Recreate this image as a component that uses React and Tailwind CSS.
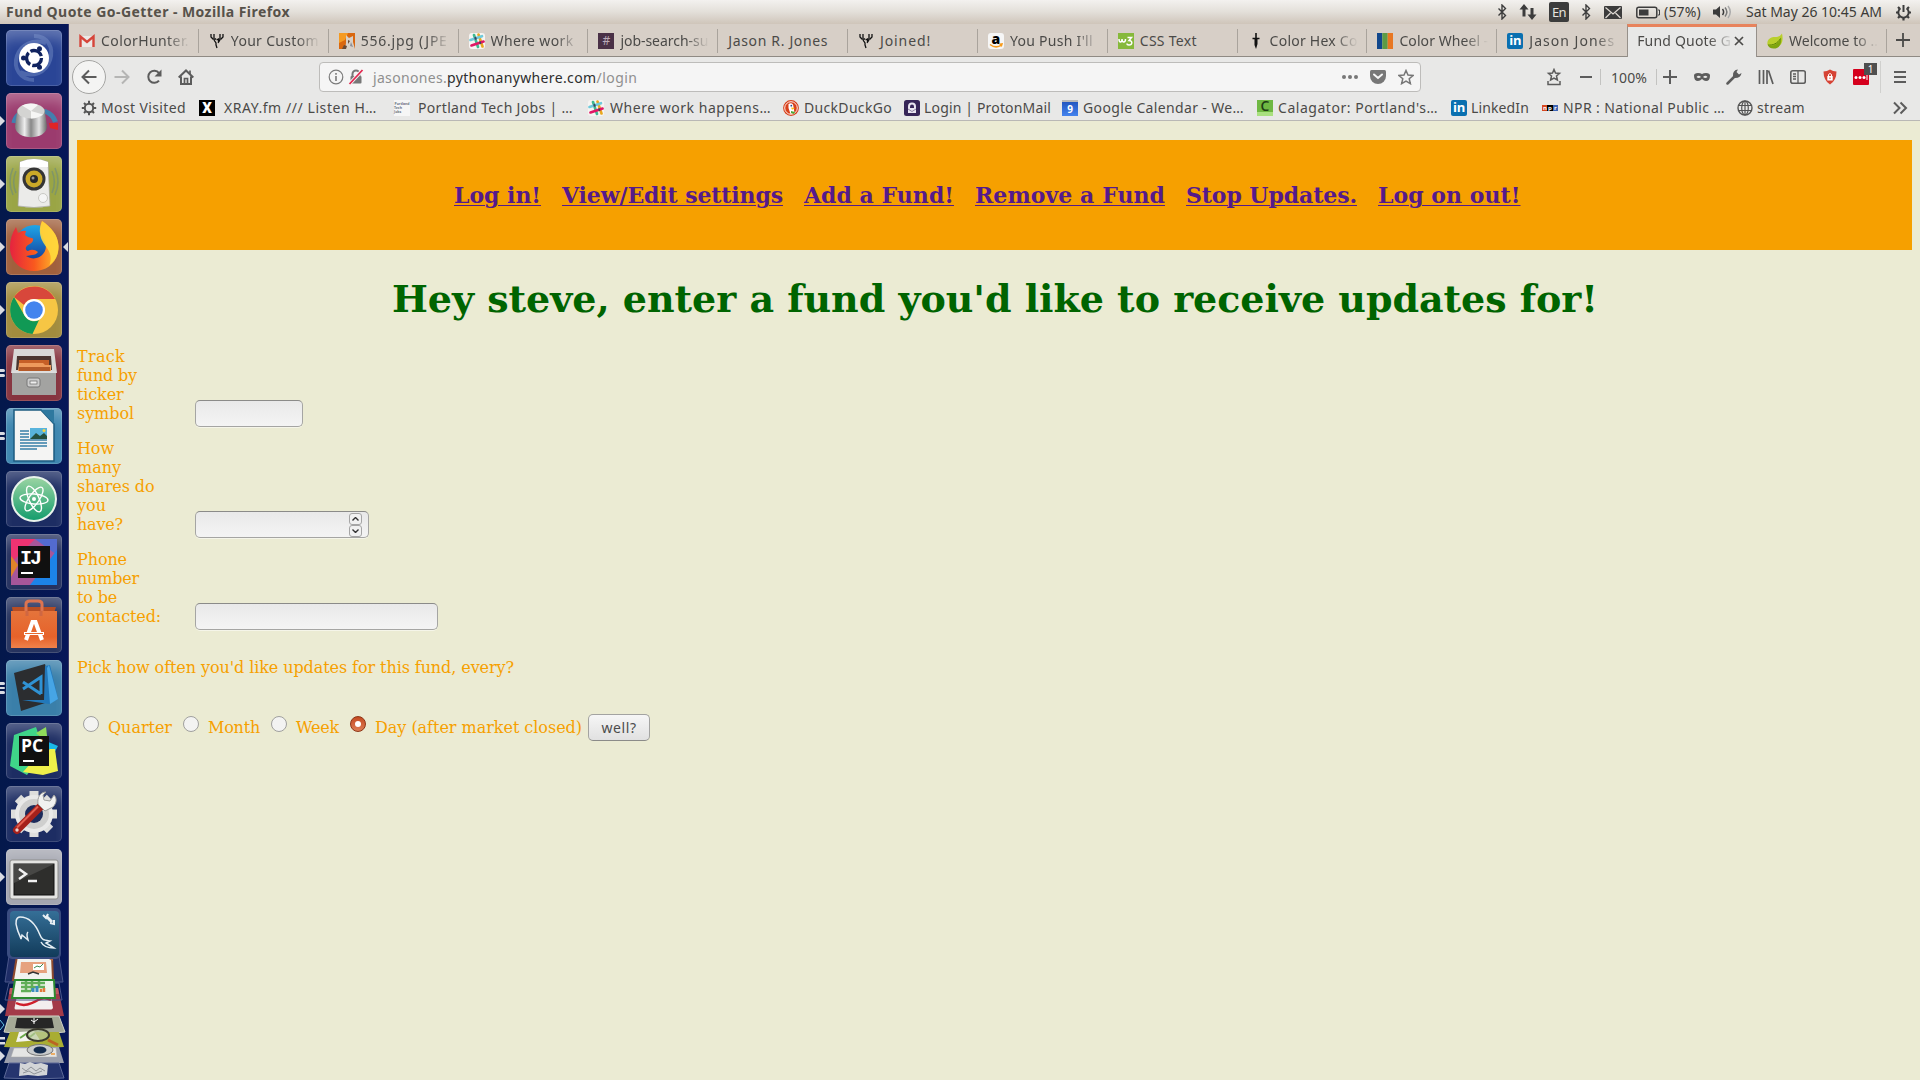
import React, { useLayoutEffect, useRef } from "react";

const UI = "font-['Noto_Sans','Open_Sans',sans-serif]";

/* Text run whose letter spacing is adjusted to fill a known width. */
function T({ w, className = "", children }) {
  const ref = useRef(null);
  useLayoutEffect(() => {
    const el = ref.current;
    el.style.letterSpacing = "0px";
    const natural = el.getBoundingClientRect().width;
    el.style.letterSpacing = `${(w - natural) / el.textContent.length}px`;
  }, [w]);
  return (
    <span ref={ref} className={`inline-block shrink-0 whitespace-pre ${className}`}>
      {children}
    </span>
  );
}

function Svg({ w = 16, h, vb, className = "", children }) {
  return (
    <svg width={w} height={h || w} viewBox={vb || `0 0 ${w} ${h || w}`} fill="none" className={`shrink-0 ${className}`}>
      {children}
    </svg>
  );
}

/* ---------- favicons ---------- */
const Gmail = () => (
  <Svg>
    <rect x="1" y="3" width="14" height="11" fill="#ece8e6" />
    <path d="M1.500 14V3.500L8 9l6.500-5.500V14" stroke="#d6453a" strokeWidth="2.400" />
  </Svg>
);
const Deer = () => (
  <Svg>
    <path d="M2 1v3l2 2h3M5 1v4M14 1v3l-2 2H9M11 1v4M5 7l2 3v2l1 3M11 7l-2 3M7.500 6.500h2v3" stroke="#111" strokeWidth="1.300" />
  </Svg>
);
const Photo = () => (
  <Svg>
    <rect width="16" height="16" fill="#d9670f" />
    <path d="M0 0h9L6 7 0 10z" fill="#f59a22" />
    <path d="M7 2l3 3 4-2v6l2 7H6l1-6z" fill="#d8cfc6" />
    <path d="M9 7l2 1-2 3zM5 12l3 1-1 3H3z" fill="#6b4a34" />
    <path d="M12 9l2 5-3-1z" fill="#8d8f97" />
  </Svg>
);
const Slack = () => (
  <Svg>
    <rect width="16" height="16" rx="3" fill="#f6f4f2" />
    <path d="M5 2l4 12" stroke="#3eb991" strokeWidth="2.600" strokeLinecap="round" />
    <path d="M9.500 1.500l4 12" stroke="#e9a820" strokeWidth="2.600" strokeLinecap="round" />
    <path d="M1.500 7L13 3.200" stroke="#6ecadc" strokeWidth="2.600" strokeLinecap="round" />
    <path d="M2.500 12.500L14.500 8.500" stroke="#e01765" strokeWidth="2.600" strokeLinecap="round" />
    <path d="M5.500 5.700l2-.7M10.500 10l1.500-.5" stroke="#36485e" strokeWidth="2.600" />
  </Svg>
);
const Hash = () => (
  <span className="flex size-4 shrink-0 items-center justify-center bg-[#4a3147] font-['Noto_Sans',sans-serif] text-[12px] leading-none text-[#b9a9b7]">#</span>
);
const Amazon = () => (
  <span className="relative flex size-4 shrink-0 justify-center rounded-[3px] bg-[#f6f6f6] font-['Open_Sans',sans-serif] text-[14px] leading-[11px] font-extrabold text-black">
    a
    <Svg className="absolute inset-0"><path d="M2 11.500c4 3 8 3 11.500.5M11.500 11.300l2.500-.3-.8 2.500" stroke="#f79b1c" strokeWidth="1.500" /></Svg>
  </span>
);
const W3 = () => (
  <Svg>
    <rect width="16" height="16" fill="#86b93b" />
    <path d="M1 6c0 4 3 4 3 0 0 4 3.500 4 3.500 0M9.500 4.500h4L11 7.500c4 0 3.500 4.500 0 4.500-1 0-2-.5-2-1.500" stroke="#fff" strokeWidth="1.500" />
  </Svg>
);
const Pen = () => (
  <Svg>
    <path d="M8 0v5M4.500 5.500h7" stroke="#111" strokeWidth="1.600" />
    <path d="M6.500 6h3v5L8 16l-1.500-4z" fill="#111" />
  </Svg>
);
const Bars = () => (
  <Svg>
    <path fill="#12488c" d="M0 0h5.300v16H0z" /><path fill="#5c9c45" d="M5.300 0h5.400v16H5.300z" /><path fill="#e87722" d="M10.700 0H16v16h-5.300z" />
  </Svg>
);
const LinkedIn = () => (
  <span className="flex size-4 shrink-0 items-center justify-center rounded-[2px] bg-[#0a70b0] pb-px font-['Open_Sans',sans-serif] text-[13px] leading-none font-bold tracking-tight text-white">in</span>
);
const Leaf = () => (
  <Svg>
    <path d="M15 0.500c2 9-1 13.500-8 13.500-3 0-5-.5-6.500-2C-.5 6 4 4 8 4c3 0 5.500-1 7-3.500z" fill="#b9cf2c" />
    <path d="M1 12.500c6 1 11-2 13-8 1 7-2 11-7.500 11-3 0-4.500-1.300-5.500-3z" fill="#7fa50e" />
    <path d="M1 12c5 .5 9.500-1.500 12.500-6.500" stroke="#5c8305" />
  </Svg>
);
const GearSmall = () => (
  <Svg>
    <circle cx="8" cy="8" r="4.200" stroke="#555" strokeWidth="2" />
    <path d="M8 .8v2.500M8 12.700v2.500M.8 8h2.500M12.700 8h2.500M3 3l1.700 1.700M11.300 11.300L13 13M3 13l1.700-1.700M11.300 4.700L13 3" stroke="#555" strokeWidth="2" />
  </Svg>
);
const XIcon = () => (
  <span className="flex size-4 shrink-0 items-center justify-center bg-black font-['Roboto',sans-serif] text-[15px] leading-none font-black text-white">X</span>
);
const Tiny = () => (
  <span className="flex size-4 shrink-0 flex-col items-center justify-center bg-[#f6f6f6] font-['Noto_Sans',sans-serif] text-[3.500px] leading-[4px] font-bold text-gray-500">
    <span>Portland</span><span>Tech Jobs</span>
  </span>
);
const Duck = () => (
  <Svg>
    <circle cx="8" cy="8" r="7.900" fill="#d8401b" /><circle cx="8" cy="8" r="6.300" stroke="#fff" strokeWidth=".9" />
    <path d="M5.500 4c3-2 5 0 5 3l1 6-4 1-2-6z" fill="#fff" />
    <path d="M8 7.500l4 .5-3 1.700z" fill="#fdbb12" /><path d="M8 11l4 1-1 2-3-1z" fill="#4caa35" /><circle cx="8.300" cy="5.700" r=".9" fill="#234a91" />
  </Svg>
);
const Proton = () => (
  <Svg>
    <rect width="16" height="16" rx="2.500" fill="#372658" />
    <path d="M4 13V6.500a4 4 0 018 0V13z" fill="#e9e5f0" />
    <path d="M6 8V6.500a2 2 0 014 0V8z" fill="#372658" /><path d="M4 9l4 2.500L12 9" stroke="#8d84a4" />
  </Svg>
);
const GCal = () => (
  <span className="flex size-4 shrink-0 items-center justify-center border-t-2 border-[#b9b9b9] bg-linear-to-b from-[#2457c0] to-[#4483ee] font-['Open_Sans',sans-serif] text-[10px] leading-none font-bold text-white">9</span>
);
const Cal = () => (
  <span className="flex size-4 shrink-0 items-center justify-center border-b-4 border-[#a9e07f] bg-[#6fb843] font-['Open_Sans',sans-serif] text-[14px] leading-none font-semibold text-[#1f3d14]">C</span>
);
const Npr = () => (
  <span className="flex size-4 shrink-0 items-center font-['Open_Sans',sans-serif] text-[6px] leading-[6px] font-bold text-white">
    <span className="w-[5px] bg-[#d7481f] pl-px">n</span><span className="w-[6px] bg-black pl-px">p</span><span className="w-[5px] bg-[#3f66b5] pl-px">r</span>
  </span>
);
const Globe = () => (
  <Svg>
    <circle cx="8" cy="8" r="7" stroke="#555" strokeWidth="1.400" /><ellipse cx="8" cy="8" rx="3.300" ry="7" stroke="#555" strokeWidth="1.200" />
    <path d="M1.500 5.500h13M1.500 10.500h13M8 1v14" stroke="#555" strokeWidth="1.200" />
  </Svg>
);

/* ---------- system panel ---------- */
const Bluetooth = ({ className }) => (
  <Svg w={10} h={16} className={className}><path d="M1.500 4.500l7 7L5 15V1l3.500 3.500-7 7" stroke="#3c3c3c" strokeWidth="1.400" /></Svg>
);

function Panel() {
  return (
    <header className={`flex h-6 items-center bg-linear-to-b from-[#f3f1ef] via-[#e3dfd9] to-[#cfc5ba] text-[#3c3b37] ${UI}`}>
      <T w={284} className="ml-1.5 text-[14px] leading-6 font-bold text-[#57524a]">Fund Quote Go-Getter - Mozilla Firefox</T>
      <div className="ml-auto flex h-6 items-center pr-2">
        <Bluetooth />
        <Svg w={18} h={16} className="ml-[12px]">
          <path d="M5 0L.500 5.500H3.500v7h3v-7h3zM13 16l-4.500-5.500h3V4h3v6.500h3z" fill="#3c3c3c" />
        </Svg>
        <span className="ml-[12px] flex h-5 w-5 items-center justify-center rounded-[2px] bg-[#3c3c3c] text-[13px] leading-5 text-[#e8e4df]"><T w={14}>En</T></span>
        <Bluetooth className="ml-[12px]" />
        <Svg w={18} h={13} className="ml-[13px]">
          <rect width="18" height="13" rx="1" fill="#3c3c3c" /><path d="M1.500 1.500L9 8l7.500-6.500M1.500 12L6.500 7M16.500 12l-5-5" stroke="#e0dbd5" strokeWidth="1.200" />
        </Svg>
        <Svg w={24} h={13} className="ml-[14px]">
          <rect x=".8" y="1.300" width="20" height="10.500" rx="2" stroke="#3c3c3c" strokeWidth="1.500" /><rect x="3" y="3.500" width="9.500" height="6" fill="#3c3c3c" /><path d="M22 4h1.500v5H22" stroke="#3c3c3c" />
        </Svg>
        <T w={37} className="ml-[4px] text-[14px] leading-6">(57%)</T>
        <Svg w={20} h={16} className="ml-[12px]">
          <path d="M0 5.500h3L7 2v12l-4-3.500H0z" fill="#3c3c3c" /><path d="M9.500 5c1.500 2 1.500 4 0 6" stroke="#3c3c3c" strokeWidth="1.500" /><path d="M12 3.500c2.500 3 2.500 6 0 9" stroke="#777" strokeWidth="1.500" /><path d="M15 2c3 4 3 8 0 12" stroke="#aaa" strokeWidth="1.500" />
        </Svg>
        <T w={136} className="ml-[13px] text-[14px] leading-6">Sat May 26 10:45 AM</T>
        <Svg w={17} className="ml-[13px]" vb="0 0 17 17">
          <path d="M5.500 4.200a5.200 5.200 0 106 0" stroke="#3c3c3c" strokeWidth="2" /><path d="M8.500 1v7" stroke="#3c3c3c" strokeWidth="2" />
          <path d="M1 8.500h2M14 8.500h2M3 14l1.500-1.500M14 14l-1.500-1.500M8.500 14v2.500M3 3l1.500 1.500M14 3l-1.500 1.500" stroke="#3c3c3c" strokeWidth="2.200" />
        </Svg>
      </div>
    </header>
  );
}

/* ---------- launcher ---------- */
const Dash = () => (
  <>
    <path d="M28 6c14 0 20 12 16 24-4 13-17 18-30 12M28 50C14 50 7 38 11 26 15 14 27 9 40 13" stroke="#8ea5d8" strokeWidth="4" opacity=".35" />
    <circle cx="28" cy="28" r="15" fill="#fff" /><circle cx="28" cy="28" r="7.500" stroke="#10235f" strokeWidth="3.300" strokeDasharray="13.500 2.200" />
    <circle cx="17.500" cy="28" r="2.500" fill="#10235f" /><circle cx="33.500" cy="18.700" r="2.500" fill="#10235f" /><circle cx="33.500" cy="37.300" r="2.500" fill="#10235f" />
  </>
);
const Knob = () => (
  <>
    <path d="M8 30c1-7 8-12 14-13M38 18c6 2 10 6 11.500 11" stroke="#437fae" strokeWidth="5" /><path d="M43 30l9 0v7l-8-2z" fill="#e02426" />
    <path d="M9 33l2.500-17h27L41 33c0 15-32 15-32 0z" fill="url(#metal)" /><ellipse cx="25" cy="18" rx="13.500" ry="7.500" fill="#d4d4d2" /><path d="M25 18l-9-5.500q8-3.500 16-.5zM25 18l12 3.500q-5 4-12 4z" fill="#f6f6f5" />
  </>
);
const Speaker = () => (
  <>
    <path d="M7 12c-4 9-4 18 0 27M49 12c4 9 4 18 0 27M10 15c-3 7-3 15 0 22M46 15c3 7 3 15 0 22" stroke="#6d8b7d" strokeWidth="1.500" opacity=".6" />
    <path d="M14 6q14-6 28 0l2 44q-16 3-32 0z" fill="#ebebe9" stroke="#a5a5a0" strokeWidth=".7" /><path d="M14 6q14-6 28 0v5H14z" fill="#fff" />
    <circle cx="28" cy="23" r="11.500" fill="#353535" /><circle cx="28" cy="23" r="8.500" fill="#cba928" /><circle cx="28" cy="23" r="4" fill="#292929" /><circle cx="27" cy="22" r="1.500" fill="#999" /><circle cx="37" cy="42" r="4.500" fill="#f5f5f5" stroke="#c9c9c5" />
  </>
);
const Firefox = () => (
  <>
    <circle cx="29" cy="27" r="21" fill="url(#ffblue)" />
    <path d="M36 2c9 6 16 14 16.500 25C53 42 42 52 28 52 14 52 4 42 4 28c0-7 2-14 6-20l2 6q4-3 8-2l-1 4q3 3 8 3.500 1 4-5 6.500c-3 2-3 5 0 6q5-3 10 1-2 3-6 3c-3 0-3 1-6 1 9 6 20 0 20-10 0-7-9-12-4-25z" fill="url(#ff)" />
    <path d="M36 2c9 6 16 14 16.500 25 0 8-3 15-9 19 3-8 0-14-4-19-5-7-8-14-3.500-25z" fill="#ffd83c" opacity=".9" />
  </>
);
const Chrome = () => (
  <>
    <circle cx="28" cy="28" r="24" fill="#f6c644" /><path d="M8 15A24 24 0 0149 17H28a11 11 0 00-10 6z" fill="#d8473b" />
    <path d="M8 15l10.500 18.500A11 11 0 0033 38L26.500 52A24 24 0 018 15z" fill="#119955" /><circle cx="28" cy="28" r="11" fill="#fff" /><circle cx="28" cy="28" r="8.800" fill="#4384ee" />
  </>
);
const Files = () => (
  <>
    <path d="M8 4h40l3 24H5z" fill="#d9d9d7" /><path d="M11 11h34l1 14H10z" fill="#4b3630" /><path d="M13 15h30v10H13z" fill="#c65f27" /><path d="M13 18h24l2 2h6v6H12z" fill="#ee9a5c" /><path d="M13 22h31v4H13z" fill="#b55a28" />
    <path d="M6 26h44v24H6z" fill="#a3a3a1" /><path d="M6 26h44v2H6z" fill="#ddd" /><rect x="21" y="33" width="13" height="9" rx="2" fill="#ccc" stroke="#777" /><rect x="24" y="36" width="7" height="3" fill="#eee" stroke="#666" strokeWidth=".7" />
  </>
);
const Writer = () => (
  <>
    <path d="M8 2h27l13 14v37H8z" fill="#f4f4f3" stroke="#1d5b80" strokeWidth="1.500" /><path d="M35 2h13v14z" fill="#2e789f" />
    <path d="M14 23h9M14 26h9M14 29h9M14 32h27M14 35h27M14 38h27M14 41h17" stroke="#347da8" strokeWidth="1.500" />
    <rect x="24" y="20" width="17" height="11" fill="#58b3dc" /><path d="M24 31l6-6 4 3 4-3 3 3v3z" fill="#244f40" /><circle cx="38" cy="22.500" r="1.500" fill="#f5d33f" />
  </>
);
const Atom = () => (
  <>
    <circle cx="28" cy="28" r="22" fill="url(#atom)" stroke="#e9f3ec" strokeWidth="2" /><circle cx="28" cy="28" r="2" fill="#fff" />
    <g stroke="#fff" strokeWidth="1.400"><ellipse cx="28" cy="28" rx="14" ry="5" transform="rotate(5 28 28)" /><ellipse cx="28" cy="28" rx="14" ry="5" transform="rotate(65 28 28)" /><ellipse cx="28" cy="28" rx="14" ry="5" transform="rotate(125 28 28)" /></g>
  </>
);
const IJ = () => (
  <>
    <path d="M5 5h46v46H5z" fill="#a75699" /><path d="M5 5h24L5 29z" fill="#ee3372" /><path d="M5 22l7 9-7 12z" fill="#e08329" /><path d="M29 5h22v16z" fill="#536bd0" /><path d="M24 51l27-35v35z" fill="#1c83e8" />
    <path d="M12 12h32v32H12z" fill="#101010" /><path d="M15 38h12v2H15z" fill="#fff" />
    <text x="14" y="30" fill="#fff" fontFamily="Liberation Mono" fontWeight="700" fontSize="20" letterSpacing="-2">IJ</text>
  </>
);
const Bag = () => (
  <>
    <path d="M6 10h44l-2 6H7z" fill="#b84e23" /><path d="M20 18V7q0-3 4-3h8q4 0 4 3v11" stroke="#dc7450" strokeWidth="3" /><path d="M5 14h46v37H5z" fill="url(#bag)" /><path d="M21 19v-5M35 19v-5" stroke="#cf6742" strokeWidth="3" />
    <path d="M20 43l6.500-18h3L36 43" stroke="#fff" strokeWidth="4" /><path d="M18 36.500h20" stroke="#fff" strokeWidth="3" /><path d="M19 36.500h18" stroke="#e8672c" strokeWidth="1" />
  </>
);
const Code = () => (
  <>
    <path d="M8 13l31-9 9 36-33 11z" fill="#2b2d30" /><path d="M39 6l5-1 8 34-9 5-27-4h22z" fill="#2278ba" /><path d="M43 5l9 34-8 5-3-36z" fill="#46a5e5" />
    <path d="M17 22l18 12M17 29l18-12v17" stroke="#2f92d4" strokeWidth="3" />
  </>
);
const PyCharm = () => (
  <>
    <path d="M8 12l22-8 8 24-17 24L4 43z" fill="#3fd589" /><path d="M30 10l10-6 2 17z" fill="#8fdc5b" /><path d="M40 18l12 5-6 11z" fill="#19b8e8" /><path d="M44 26h5l3 22-15 4-20-3 8-9z" fill="#eff04a" />
    <path d="M13 13h30v30H13z" fill="#101010" /><path d="M17 37h11v2H17z" fill="#fff" /><text x="15" y="29" fill="#fff" fontFamily="Open Sans" fontWeight="700" fontSize="17.500">PC</text>
  </>
);
const Settings = () => (
  <>
    <path d="M28 5v46M5 28h46M12 12l32 32M44 12L12 44" stroke="#dededc" strokeWidth="9" /><circle cx="28" cy="28" r="19" fill="#e9e9e8" /><circle cx="28" cy="28" r="15" fill="#cfcfce" /><circle cx="28" cy="28" r="9" fill="#1c2b5b" />
    <path d="M11 44l23-23" stroke="#a5211b" strokeWidth="8" strokeLinecap="round" /><path d="M11 41.500l21-21" stroke="#e56050" strokeWidth="2" />
    <path d="M32 18l7 7 8-4c4-4 4-9 1-12l-4 6-6-1-1-5 3-3c-6 0-9 6-8 12z" fill="#f1f1f0" stroke="#9e9e9c" /><circle cx="11" cy="44" r="1.700" fill="#e9d0cd" />
  </>
);
const Terminal = () => (
  <>
    <rect x="4" y="11" width="48" height="39" rx="2" fill="#e4e4e2" stroke="#8e8e8c" /><rect x="8" y="15" width="40" height="31" fill="#2e2e2c" stroke="#111" /><path d="M8 15h40L8 34z" fill="#474745" />
    <path d="M13 20l7 5-7 5" stroke="#f1f1f1" strokeWidth="2.500" /><path d="M22 32h9" stroke="#f1f1f1" strokeWidth="2.500" />
  </>
);

const TILES = [
  [Dash, "bg-[#2a4596]", 0],
  [Knob, "bg-[#9b3b6e]", 1],
  [Speaker, "bg-[#9aa545]", 1],
  [Firefox, "bg-[#a0603d]", 1],
  [Chrome, "bg-[#a28c3e]", 1],
  [Files, "bg-[#86343f]", 2],
  [Writer, "bg-[#3d86b0]", 2],
  [Atom, "bg-[#1d2d63]", 0],
  [IJ, "bg-[#25315f]", 0],
  [Bag, "bg-[#26335f]", 0],
  [Code, "bg-[#3a7fa9]", 3],
  [PyCharm, "bg-[#1d2d63]", 0],
  [Settings, "bg-[#1d2d63]", 0],
  [Terminal, "bg-[#a4a6b0]", 1],
];

function Pips({ n }) {
  if (n === 1) return <Svg w={5} h={10} className="absolute top-[23px] -left-1.5"><path d="M0 0l5 5-5 5z" fill="#d9dbe2" /></Svg>;
  return (
    <span className="absolute top-[22px] -left-1.5 flex h-3 flex-col justify-center gap-[2px]">
      {Array.from({ length: n }, (_, i) => <i key={i} className="h-[3px] w-[5px] rounded-r-sm bg-[#d9dbe2]" />)}
    </span>
  );
}

/* Folded launcher items at the bottom edge. */
const Folded = () => (
  <Svg w={68} h={172} className="-mt-[4px] -ml-1.5">
    <path d="M9 48h50l4 26H5z" fill="#1f2d67" stroke="#4a568a" />
    <path d="M17 48h35l1 24H13z" fill="#f2f2ef" stroke="#8d4a2e" strokeWidth="2" />
    <path d="M45 49h8v4z" fill="#b0673f" />
    <path d="M21 54h25l1 11H20z" fill="#e6a17e" /><path d="M33 56h11v6H33z" fill="#fff" /><path d="M34 60l3-2 3 1 3-3" stroke="#3b8950" /><path d="M28 66l5-2 6 2" stroke="#333" strokeWidth="1.500" />
    <rect x="7" y="0" width="54" height="51" rx="5" fill="#3a4c80" /><rect x="10" y="3" width="49" height="46" rx="4" fill="url(#sql)" />
    <path d="M17 20c-2-6-1-11 3-11 10 0 16 8 20 18 2 5 3 5 10 6l-4 2 8 5c-7 0-11-2-13-6M17 20c1 5 3 7 4 11l1-4 6 5c-1-4-2-6 0-8" stroke="#e5eef4" strokeWidth="1.500" />
    <path d="M46 8l6 6" stroke="#e8eff4" strokeWidth="3" /><path d="M43 7l3 3 2-4M50 15l4 1v-4" stroke="#e8eff4" strokeWidth="2" />
    <path d="M10 80h48l6 28q-30 2-59 0z" fill="#a33a49" /><path d="M10 80h48l1 6H9z" fill="#c05762" />
    <path d="M17 88h34l2 12q-1 1.500-2 1.500H16q-1.500 0-1.500-1.500z" fill="#f3eeee" /><path d="M16 95c8 4 15 1 22-3 5-3 9-2 13 0" stroke="#d01f2a" strokeWidth="2.500" />
    <path d="M9 75h50l3 17H5z" fill="none" stroke="#4a568a" />
    <path d="M15 72h39l1 18H12z" fill="#eef3ea" stroke="#2c8a30" strokeWidth="2" /><path d="M21 75h24M21 79h24M21 83h10M26 73v11M32 73v10M39 73v6" stroke="#61ae58" strokeWidth="2.500" /><path d="M33 84v-4M37 84v-6" stroke="#3b8dc0" strokeWidth="3" /><path d="M41 84v-3M44 84v-4" stroke="#e3793b" strokeWidth="2.500" />
    <path d="M9 108h50l6 16q-31 4-61 0z" fill="#a5a996" stroke="#d0d2c6" /><path d="M17 110h35l2 10q-19 1-39 0z" fill="#262626" /><path d="M34 110v6M31 112l3 2 4-3" stroke="#fff" />
    <path d="M10 124h49l5 15q-30 2-60 0z" fill="#a9ad33" /><path d="M19 124l15-1 6 9-24 2z" fill="#f4f4ee" /><path d="M20 130l6-4 4 3 5-4" stroke="#6aa84a" strokeWidth="2" /><ellipse cx="38" cy="127" rx="11" ry="6" fill="#b9ca9b" fillOpacity=".7" stroke="#3a3a2d" strokeWidth="2" /><path d="M48 132l10 5" stroke="#ba6522" strokeWidth="3" />
    <path d="M10 139h49l5 16H4z" fill="#9b9fac" /><path d="M14 140h42l1 9H11z" fill="#e5e5e4" stroke="#aaa" strokeWidth=".5" /><ellipse cx="40" cy="142" rx="13" ry="5.500" fill="#c9cbcc" stroke="#777" /><ellipse cx="40" cy="142" rx="6.500" ry="3.500" fill="#142b4d" /><path d="M51 146h4" stroke="#ee9a3d" strokeWidth="1.500" />
    <path d="M9 155h50l5 15q-30 2-60 0z" fill="#26356f" stroke="#5a6796" /><path d="M20 155l5 1 5-2 5 2 6-1 7 2-1 10-9 1-10-1-9 1z" fill="#d3d5d7" /><path d="M22 160l4 3 5-4 5 4 4-3 5 3M23 165l6-2 5 3 8-3" stroke="#909499" />
    <path d="M0 96l5 5-5 5z" fill="#d9dbe2" /><path d="M0 112l4 5-4 5" stroke="#66c5e8" /><path d="M0 129h5v2.500H0zM0 134h5v2.500H0z" fill="#d9dbe2" /><path d="M0 143l5 5-5 5z" fill="#d9dbe2" />
  </Svg>
);

function Launcher() {
  return (
    <aside className="flex w-[69px] shrink-0 flex-col items-start gap-[7px] border-r border-[#3b3a66] bg-linear-to-r from-[#04184b] to-[#071758] pt-1.5 pl-1.5">
      {TILES.map(([Icon, bg, n], i) => (
        <div key={i} className={`relative size-14 shrink-0 rounded-[5px] shadow-[inset_0_0_0_1px_rgba(255,255,255,0.15),inset_0_14px_14px_-6px_rgba(255,255,255,0.28)] ${bg}`}>
          <Svg w={56}><Icon /></Svg>
          {n > 0 && <Pips n={n} />}
          {Icon === Firefox && <Svg w={5} h={10} className="absolute top-[23px] left-[57px]"><path d="M5 0v10L0 5z" fill="#d9dbe2" /></Svg>}
        </div>
      ))}
      <Folded />
      <svg width="0" height="0" className="absolute">
        <defs>
          <linearGradient id="metal"><stop stopColor="#777" /><stop offset=".3" stopColor="#eee" /><stop offset=".5" stopColor="#888" /><stop offset=".75" stopColor="#e4e4e4" /><stop offset="1" stopColor="#666" /></linearGradient>
          <linearGradient id="ff" x1="0" x2="1"><stop stopColor="#e5233f" /><stop offset=".5" stopColor="#f9591e" /><stop offset="1" stopColor="#ffc32b" /></linearGradient>
          <linearGradient id="ffblue" x1="0" y1="0" x2="0" y2="1"><stop stopColor="#1fa6e8" /><stop offset="1" stopColor="#112b8c" /></linearGradient>
          <linearGradient id="atom" x1="0" y1="0" x2="0" y2="1"><stop stopColor="#9cd5a3" /><stop offset="1" stopColor="#139c6c" /></linearGradient>
          <linearGradient id="bag" x1="0" y1="0" x2="0" y2="1"><stop stopColor="#e5743b" /><stop offset=".7" stopColor="#e6622a" /><stop offset="1" stopColor="#f0824b" /></linearGradient>
          <linearGradient id="sql" x1="0" y1="0" x2="0" y2="1"><stop stopColor="#356f97" /><stop offset="1" stopColor="#123b5a" /></linearGradient>
        </defs>
      </svg>
    </aside>
  );
}

/* ---------- browser chrome ---------- */
const TABS = [
  [Gmail, "ColorHunter.", 88, 1],
  [Deer, "Your Custom", 88, 1],
  [Photo, "556.jpg (JPE", 87, 1],
  [Slack, "Where work", 83, 1],
  [Hash, "job-search-su", 88, 1],
  [null, "Jason R. Jones", 100, 0],
  [Deer, "Joined!", 51, 0],
  [Amazon, "You Push I'll", 83, 1],
  [W3, "CSS Text", 57, 0],
  [Pen, "Color Hex Co", 88, 1],
  [Bars, "Color Wheel -", 89, 1],
  [LinkedIn, "Jason Jones", 86, 1],
  [null, "Fund Quote G", 94, 1],
  [Leaf, "Welcome to ..", 89, 1],
];

function Tabs() {
  return (
    <div className="flex h-[33px] shrink-0 bg-[#d7cfc7]">
      {TABS.map(([Icon, label, w, fade], i) => {
        const active = i === 12;
        return (
          <div
            key={label}
            className={`flex w-[129.850px] shrink-0 items-center pl-2.5 ${active ? "border-x border-t-[3px] border-x-[#96908a] border-t-[#e8835c] bg-[#e8e8e7] pb-[2px] pl-[9px]" : "border-b border-[#8f8a84] pt-px"}`}
          >
            {Icon && <span className="mr-1.5 flex"><Icon /></span>}
            <div className={`min-w-0 flex-1 ${fade ? "mask-r-from-74%" : ""} ${active ? "mr-0" : "mr-2"}`}>
              <T w={w} className="align-top text-[14px] leading-6 text-[#4b4a48]">{label}</T>
            </div>
            {active ? (
              <Svg w={10} className="mr-3"><path d="M1 1l8 8M9 1L1 9" stroke="#4b4a48" strokeWidth="1.700" /></Svg>
            ) : (
              i !== 11 && <i className="h-6 w-px shrink-0 bg-[#a9a39c]" />
            )}
          </div>
        );
      })}
      <div className="flex flex-1 items-center justify-center border-b border-[#8f8a84]">
        <Svg w={14}><path d="M7 0v14M0 7h14" stroke="#4b4a48" strokeWidth="1.800" /></Svg>
      </div>
    </div>
  );
}

const G = "#5c5c5c";

function NavBar() {
  return (
    <div className="flex h-[40px] shrink-0 items-center pl-[3px]">
      <span className="flex size-[34px] shrink-0 items-center justify-center rounded-full border border-[#a5a5a3] bg-[#f4f4f3]">
        <Svg><path d="M15.500 8H1.500M8 1.500L1.500 8 8 14.500" stroke={G} strokeWidth="2" /></Svg>
      </span>
      <Svg className="ml-[8px]"><path d="M.5 8h14M8 1.500L14.500 8 8 14.500" stroke="#b5b5b4" strokeWidth="2" /></Svg>
      <Svg className="ml-[16px]"><path d="M13 11.500A6 6 0 1113 4" stroke={G} strokeWidth="2" /><path d="M15.500 .5v7h-7z" fill={G} /></Svg>
      <Svg className="ml-[16px]"><path d="M.7 8.500L8 1.500l7.300 7M3 7.500V15h10V7.500" stroke={G} strokeWidth="2" /><path d="M6.500 15V9.500h3V15M12 1.500V5" stroke={G} strokeWidth="1.700" /></Svg>
      <div className="ml-[125px] flex h-[30px] w-[1102px] shrink-0 items-center rounded-[4px] border border-[#bdbcba] bg-[#f5f5f5] pl-[8px]">
        <Svg><circle cx="8" cy="8" r="6.800" stroke="#7b7b7b" strokeWidth="1.200" /><path d="M8 7v5M8 4v1.700" stroke="#7b7b7b" strokeWidth="1.600" /></Svg>
        <Svg className="ml-[4px]"><path d="M4.500 7V5a3.500 3.500 0 017 0v2" stroke="#777" strokeWidth="2" /><rect x="2.500" y="7" width="11" height="7.500" rx="1" fill="#777" /><path d="M1.500 15L14.500 1" stroke="#f5f5f5" strokeWidth="3.500" /><path d="M1.500 15L14.500 1" stroke="#e22850" strokeWidth="1.800" /></Svg>
        <div className="mt-px ml-[9px] flex text-[14px] leading-6 text-[#8f8f8f]">
          <T w={74}>jasonones.</T>
          <T w={149.500} className="text-[#2e2e2e]">pythonanywhere.com</T>
          <T w={41}>/login</T>
        </div>
        <Svg className="ml-auto"><circle cx="2" cy="8" r="2" fill="#777" /><circle cx="8" cy="8" r="2" fill="#777" /><circle cx="14" cy="8" r="2" fill="#777" /></Svg>
        <Svg className="ml-[12px]"><path d="M1.500 1h13q1.500 0 1.500 1.500V7A8 8 0 010 7V2.500Q0 1 1.500 1z" fill="#777" /><path d="M4 5.500L8 9l4-3.500" stroke="#f5f5f5" strokeWidth="2" strokeLinecap="round" /></Svg>
        <Svg className="mr-[6px] ml-[12px]"><path d="M8 1.500l2 4.500 5 .5-3.800 3.200 1.200 5L8 12.200l-4.400 2.500 1.200-5L1 6.500 6 6z" stroke="#777" strokeWidth="1.500" /></Svg>
      </div>
      <Svg w={16} h={18} className="ml-[125px]"><path d="M8 1.500l1.500 3.500 4 .4-3 2.600.9 4L8 10l-3.400 2 .9-4-3-2.600 4-.4z" stroke={G} strokeWidth="1.500" /><path d="M2 13v3.500h12V13" stroke={G} strokeWidth="1.500" /></Svg>
      <Svg w={12} h={16} className="ml-[18px]"><path d="M0 8h12" stroke={G} strokeWidth="2" /></Svg>
      <i className="ml-[8px] h-4 w-px shrink-0 bg-[#c3c3c1]" />
      <T w={36} className="mt-px ml-[10px] text-[14px] leading-6 text-[#4b4a48]">100%</T>
      <i className="ml-[9px] h-4 w-px shrink-0 bg-[#c3c3c1]" />
      <Svg w={14} className="ml-[6px]"><path d="M0 7h14M7 0v14" stroke={G} strokeWidth="2" /></Svg>
      <Svg className="ml-[17px]"><path d="M0 6.500q0-2.500 4-2.500 2.500 0 4 1 1.500-1 4-1 4 0 4 2.500 0 5.500-4 5.500-2 0-4-2-2 2-4 2-4 0-4-5.500z" fill={G} /><path d="M2.500 8q2-2.500 4.500 0-2.300 2-4.500 0zM9 8q2.500-2.500 4.500 0-2.200 2-4.500 0z" fill="#e8e8e7" /></Svg>
      <Svg className="ml-[16px]"><path d="M1.500 14.500l8-8" stroke={G} strokeWidth="2.500" strokeLinecap="round" /><path d="M7 7q-.5-6 5-6.500L10.500 3 13 5.500 15.500 4q-.5 5-6.500 5z" fill={G} /></Svg>
      <Svg className="ml-[16px]"><path d="M1.500 1v14M5.500 1v14M9 1v14M10.500 1.500L15 15" stroke={G} strokeWidth="1.700" /></Svg>
      <Svg className="ml-[16px]"><rect x=".8" y="1.800" width="14.500" height="12.500" rx="2" stroke={G} strokeWidth="1.600" /><path d="M8 2v12M3 5h3M3 7.500h3M3 10h3" stroke={G} strokeWidth="1.300" /></Svg>
      <Svg className="ml-[16px]"><path d="M8 .5q3 2 6.500 2 0 9-6.500 13Q1.500 11.500 1.500 2.500q3.500 0 6.500-2z" fill="#d64335" /><rect x="5.300" y="7" width="5.400" height="4.500" fill="#fff" /><path d="M6.500 7V5.500q1.500-2 3 0V7" stroke="#fff" /><path d="M8 8.500v1.500" stroke="#d64335" /></Svg>
      <span className="relative ml-[15px] flex h-4 w-4 shrink-0 items-center justify-center rounded-[1px] bg-[#d5001d]">
        <Svg><circle cx="3" cy="8.500" r="1.500" fill="#fff" /><circle cx="7" cy="8.500" r="1.500" fill="#fff" /><circle cx="11" cy="8.500" r="1.500" fill="#fff" /><path d="M14 6v5" stroke="#fff" /></Svg>
        <span className="absolute -top-[6px] left-[11px] flex h-3 w-[13px] items-center justify-center bg-[#4f4f4f] text-[10px] leading-none text-white">1</span>
      </span>
      <i className="ml-[11px] h-8 w-px shrink-0 bg-[#d0d0ce]" />
      <Svg w={12} h={14} className="ml-[13px]"><path d="M0 2h12M0 7h12M0 12h12" stroke={G} strokeWidth="1.800" /></Svg>
    </div>
  );
}

const BOOKMARKS = [
  [GearSmall, "Most Visited", 85, "w-[118px] gap-[4px]"],
  [XIcon, "XRAY.fm /// Listen H…", 153, "w-[195px] gap-[9px]"],
  [Tiny, "Portland Tech Jobs | …", 155, "w-[194px] gap-[8px]"],
  [Slack, "Where work happens…", 161, "w-[195px] gap-[6px]"],
  [Duck, "DuckDuckGo", 88, "w-[121px] gap-[5px]"],
  [Proton, "Login | ProtonMail", 127, "w-[158px] gap-[4px]"],
  [GCal, "Google Calendar - We…", 161, "w-[195px] gap-[5px]"],
  [Cal, "Calagator: Portland's…", 160, "w-[194px] gap-[5px]"],
  [LinkedIn, "LinkedIn", 58, "w-[91px] gap-[4px]"],
  [Npr, "NPR : National Public …", 162, "w-[195px] gap-[5px]"],
  [Globe, "stream", 48, "w-[100px] gap-[4px]"],
];

function Bookmarks() {
  return (
    <div className="flex h-[24px] shrink-0 items-center border-b border-[#b9b8b5] pb-px pl-[12px] text-[14px] leading-5 text-[#4b4a48]">
      {BOOKMARKS.map(([Icon, label, w, cls]) => (
        <div key={label} className={`flex shrink-0 items-center ${cls}`}>
          <Icon />
          <T w={w}>{label}</T>
        </div>
      ))}
      <Svg className="mr-3 ml-auto"><path d="M2 2.500L7.500 8 2 13.500M8.500 2.500L14 8l-5.500 5.500" stroke={G} strokeWidth="2" /></Svg>
    </div>
  );
}

/* ---------- page ---------- */
const LINKS = [["Log in!", 87], ["View/Edit settings", 221], ["Add a Fund!", 150], ["Remove a Fund", 190], ["Stop Updates.", 171], ["Log on out!", 142.500]];

const FIELDS = [
  { lines: [["Track", 48], ["fund by", 60], ["ticker", 46.500], ["symbol", 57]], h: "h-[92px]", w: "w-[108px]", pad: "pt-[53px]" },
  { lines: [["How", 37], ["many", 44], ["shares do", 77.500], ["you", 29], ["have?", 46]], h: "h-[111px]", w: "w-[174px]", pad: "pt-[72px]", spin: true },
  { lines: [["Phone", 50], ["number", 62], ["to be", 40], ["contacted:", 84]], h: "h-[108px]", w: "w-[243px]", pad: "pt-[53px]" },
];

const OPTIONS = [["Quarter", 64, "mr-[11px]"], ["Month", 52, "mr-[11px]"], ["Week", 43, "mr-[11px]"], ["Day (after market closed)", 207, "mr-[6px]"]];

const Spin = ({ d }) => (
  <span className="flex h-[12px] w-[13px] items-center justify-center rounded-[3px] border border-[#a5a5a5] bg-[#f1f1f1]">
    <Svg w={7} h={4}><path d={d} stroke="#333" strokeWidth="1.400" /></Svg>
  </span>
);

function Page() {
  return (
    <main className="flex flex-1 flex-col bg-[#ebebd3] px-2 pt-[19px] font-['DejaVu_Serif',serif] text-[16px] leading-[19px] text-[#f6a000]">
      <nav className="flex h-[110px] gap-[21px] bg-[#f6a000] pt-[42px] pl-[377px]">
        {LINKS.map(([l, w]) => (
          <a key={l} className="text-[22px] leading-[26px] font-bold text-[#551a8b]">
            <T w={w} className="underline decoration-1 underline-offset-[2px]">{l}</T>
          </a>
        ))}
      </nav>
      <h1 className="mt-[27px] h-[70px] pl-[315px] text-[38px] leading-[44px] font-bold text-[#006400]">
        <T w={1206}>Hey steve, enter a fund you'd like to receive updates for!</T>
      </h1>
      {FIELDS.map((f) => (
        <div key={f.w} className={`flex ${f.h}`}>
          <div className="flex w-[118px] flex-col">
            {f.lines.map(([l, w]) => <div key={l} className="h-[19px]"><T w={w}>{l}</T></div>)}
          </div>
          <div className={f.pad}>
            <div className={`flex h-[27px] flex-col items-end justify-center rounded-[5px] border border-[#a5a5a3] border-t-[#8b8b89] bg-linear-to-b from-[#e9e9e9] to-[#f4f4f4] pr-[6px] shadow-[0_1px_0_rgba(255,255,255,0.5)] ${f.w}`}>
              {f.spin && <><Spin d="M.5 3.500l3-3 3 3" /><Spin d="M.5 .5l3 3 3-3" /></>}
            </div>
          </div>
        </div>
      ))}
      <p><T w={437}>Pick how often you'd like updates for this fund, every?</T></p>
      <div className="mt-[37px] flex h-[27px] items-start">
        {OPTIONS.map(([l, w, m], i) => (
          <label key={l} className={`flex ${m}`}>
            <span className={`mt-[2px] mr-[9px] flex size-4 items-center justify-center rounded-full border ${i === 3 ? "border-[#8e3516] bg-linear-to-b from-[#c54a1f] to-[#dd7d55]" : "border-[#a0a09e] bg-[#f3f3f2]"} ${i === 0 ? "ml-[6px]" : "ml-0"}`}>
              {i === 3 && <i className="size-1.5 rounded-full bg-white" />}
            </span>
            <T w={w} className="mt-[4px]">{l}</T>
          </label>
        ))}
        <button className={`flex h-[27px] w-[62px] items-center justify-center rounded-[5px] border border-[#a3a3a1] border-b-[#8b8b89] bg-linear-to-b from-[#f6f6f6] to-[#e1e1e1] text-[14px] leading-5 text-[#4c4c4c] ${UI}`}>
          <T w={35}>well?</T>
        </button>
      </div>
    </main>
  );
}

export default function App() {
  return (
    <div className="flex h-[1080px] w-[1920px] flex-col overflow-hidden">
      <Panel />
      <div className="flex min-h-0 flex-1">
        <Launcher />
        <div className="flex min-w-0 flex-1 flex-col">
          <div className={`flex flex-col bg-[#e8e8e7] ${UI}`}>
            <Tabs />
            <NavBar />
            <Bookmarks />
          </div>
          <Page />
        </div>
      </div>
    </div>
  );
}
